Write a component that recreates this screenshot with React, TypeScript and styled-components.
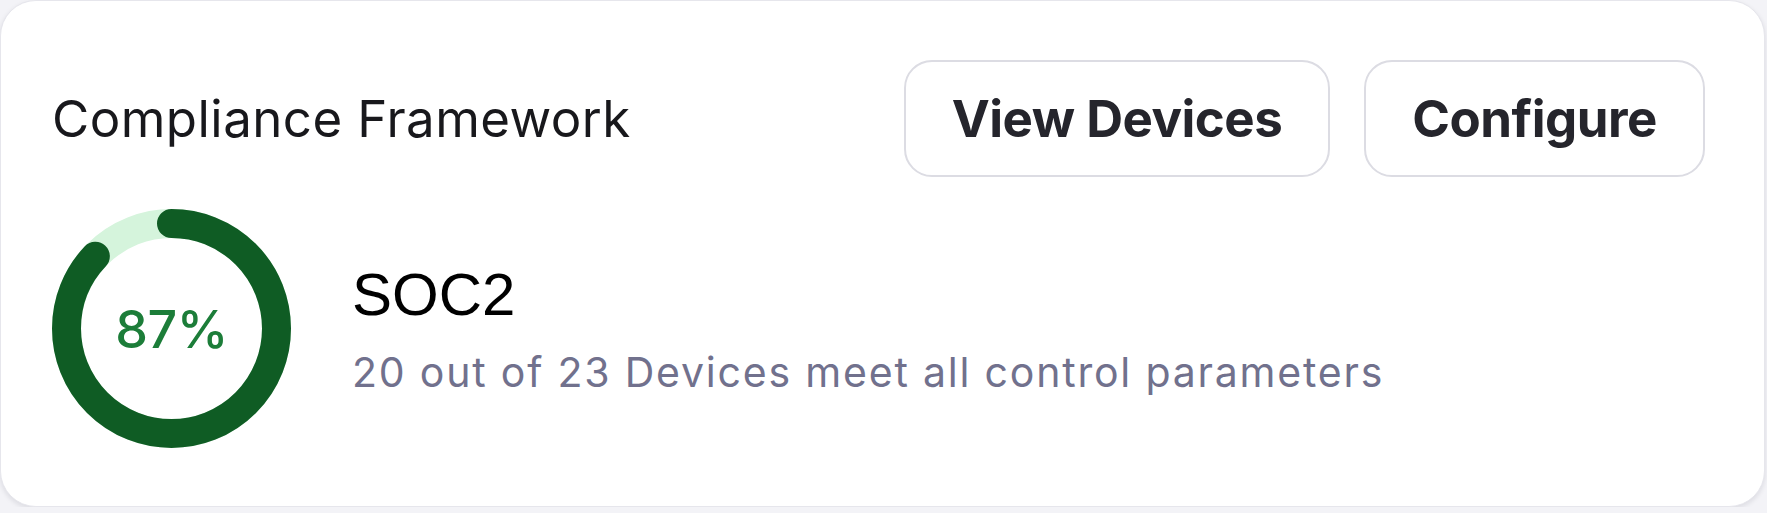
import React from "react";
import styled, { createGlobalStyle } from "styled-components";

const GlobalStyle = createGlobalStyle`
  html, body {
    margin: 0;
    padding: 0;
    background: #f3f3f7;
  }
  * { box-sizing: border-box; }
`;

const Card = styled.section`
  width: 1765px;
  height: 507px;
  background: #ffffff;
  border: 1px solid #e6e6ec;
  border-radius: 36px;
  box-shadow: 0 2px 5px rgba(20, 20, 40, 0.1);
  padding: 59px 59px 59px 51px;
  display: flex;
  flex-direction: column;
  gap: 32px;
  font-family: Inter, "Noto Sans", sans-serif;
`;

const Header = styled.div`
  display: flex;
  align-items: center;
  justify-content: space-between;
  height: 117px;
`;

const Title = styled.h2`
  margin: 0;
  font-size: 51px;
  font-weight: 400;
  letter-spacing: 0.45px;
  color: #18181c;
  line-height: 1.2;
`;

const Actions = styled.div`
  display: flex;
  gap: 34px;
`;

const Button = styled.button`
  height: 117px;
  padding: 0 46px;
  border: 2px solid #dcdce3;
  border-radius: 28px;
  background: #ffffff;
  color: #25252c;
  font-family: Inter, "Noto Sans", sans-serif;
  font-size: 51px;
  font-weight: 700;
  letter-spacing: -0.5px;
  cursor: pointer;
`;

const Body = styled.div`
  display: flex;
  align-items: center;
  gap: 61px;
`;

const Ring = styled.div`
  position: relative;
  width: 239px;
  height: 239px;
  flex: none;
`;

const RingLabel = styled.span`
  position: absolute;
  inset: 0;
  display: flex;
  align-items: center;
  justify-content: center;
  font-size: 52px;
  font-weight: 500;
  letter-spacing: -0.5px;
  color: #1c7d39;
  padding-top: 2px;
`;

const Info = styled.div`
  display: flex;
  flex-direction: column;
  gap: 19px;
`;

const Name = styled.div`
  font-family: "Liberation Sans", Arial, sans-serif;
  font-size: 60px;
  line-height: 69px;
  color: #000000;
`;

const Detail = styled.div`
  font-size: 41px;
  line-height: 49px;
  letter-spacing: 1.8px;
  color: #71718d;
`;

function Donut({ value }: { value: number }) {
  const r = 105;
  const c = 2 * Math.PI * r;
  return (
    <Ring>
      <svg width="239" height="239" viewBox="0 0 239 239">
        <circle cx="119.5" cy="119.5" r={r} fill="none" stroke="#d5f4dc" strokeWidth="29" />
        <circle
          cx="119.5"
          cy="119.5"
          r={r}
          fill="none"
          stroke="#0f5c24"
          strokeWidth="29"
          strokeLinecap="round"
          strokeDasharray={`${(c * value) / 100} ${c}`}
          transform="rotate(-90 119.5 119.5)"
        />
      </svg>
      <RingLabel>{value}%</RingLabel>
    </Ring>
  );
}

export default function App() {
  return (
    <>
      <GlobalStyle />
      <Card>
        <Header>
          <Title>Compliance Framework</Title>
          <Actions>
            <Button>View Devices</Button>
            <Button>Configure</Button>
          </Actions>
        </Header>
        <Body>
          <Donut value={87} />
          <Info>
            <Name>SOC2</Name>
            <Detail>20 out of 23 Devices meet all control parameters</Detail>
          </Info>
        </Body>
      </Card>
    </>
  );
}
